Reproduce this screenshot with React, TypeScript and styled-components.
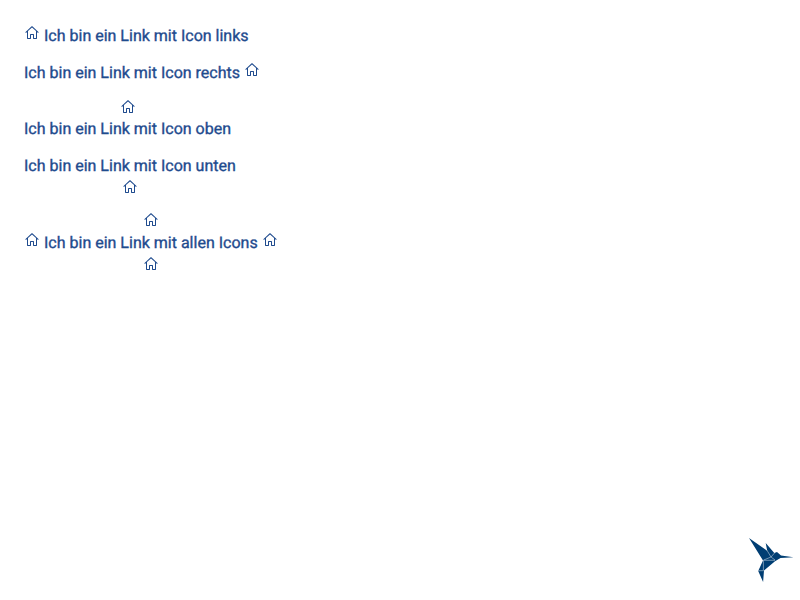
import React from "react";
import styled, { createGlobalStyle } from "styled-components";
import { VscHome } from "react-icons/vsc";

const GlobalStyle = createGlobalStyle`
  body { margin: 0; background: #fff; }
`;

const Page = styled.main`
  box-sizing: border-box;
  min-height: 600px;
  padding: 24px;
  display: flex;
  flex-direction: column;
  align-items: flex-start;
  gap: 16px;
  font-family: Roboto, sans-serif;
  font-size: 16px;
  color: #1f4b8e;
`;

const IconLink = styled.a`
  display: flex;
  flex-direction: column;
  align-items: center;
  cursor: pointer;
`;

const Line = styled.span`
  display: flex;
  gap: 4px;
  height: 21px;
  line-height: 22px;
  white-space: nowrap;
`;

const Label = styled.span<{ $lowered?: boolean }>`
  padding-top: ${({ $lowered }) => ($lowered ? "1px" : "0")};
  text-rendering: geometricPrecision;
  -webkit-text-stroke: 0.36px currentColor;
`;

const iconMargins = {
  side: "1px 0 0",
  top: "1px 0 3px",
  bottom: "3px 0 0",
  bottomLow: "4px 0 0",
};

const Icon = styled(VscHome)<{ $place: keyof typeof iconMargins }>`
  display: block;
  width: 16px;
  height: 16px;
  margin: ${({ $place }) => iconMargins[$place]};
`;

const Logo = styled.svg`
  position: fixed;
  left: 746px;
  top: 535px;
  width: 50px;
  height: 50px;
`;

type LinkProps = {
  label: string;
  left?: boolean;
  right?: boolean;
  top?: boolean;
  bottom?: boolean;
};

function LinkWithIcons({ label, left, right, top, bottom }: LinkProps) {
  const side = left || right;
  return (
    <IconLink>
      {top && <Icon $place="top" />}
      <Line>
        {left && <Icon $place="side" />}
        <Label $lowered={side}>{label}</Label>
        {right && <Icon $place="side" />}
      </Line>
      {bottom && <Icon $place={side ? "bottomLow" : "bottom"} />}
    </IconLink>
  );
}

export default function App() {
  return (
    <>
      <GlobalStyle />
      <Page>
        <LinkWithIcons label="Ich bin ein Link mit Icon links" left />
        <LinkWithIcons label="Ich bin ein Link mit Icon rechts" right />
        <LinkWithIcons label="Ich bin ein Link mit Icon oben" top />
        <LinkWithIcons label="Ich bin ein Link mit Icon unten" bottom />
        <LinkWithIcons label="Ich bin ein Link mit allen Icons" left right top bottom />
      </Page>
      <Logo viewBox="0 0 50 50" aria-label="Kolibri">
        <path
          fill="#003e73"
          d="M3 3 L21.2 15.8 L19.7 8 L28.3 18 L31 17 L35 20.6 L47.5 22.3 L34.5 23 L29 26.2 L18 35.5 L17.1 47 L12.2 36 L17 25.5 Z"
        />
        <path
          fill="none"
          stroke="#dce7ef"
          strokeWidth="0.5"
          d="M17 25.3 H29 M17.4 25.5 V35.7 H12.2 M18 24.9 L25 22 L29 25 M20.8 15 L25 22 L28.5 18"
        />
      </Logo>
    </>
  );
}
